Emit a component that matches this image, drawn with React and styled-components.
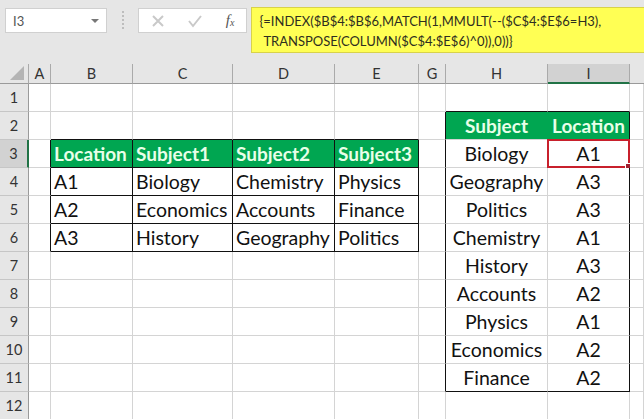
import React from 'react';
import styled, { createGlobalStyle } from 'styled-components';

const GlobalStyle = createGlobalStyle`
    html, body { margin: 0; padding: 0; background: #e6e6e6; }
    body { width: 644px; height: 419px; overflow: hidden; font-family: "Lato", "Liberation Sans", sans-serif; }
`;

const GRID = '#d4d4d4';
const BLACK = '#111';
const GREEN = '#00a651';
const columns = ['A', 'B', 'C', 'D', 'E', 'G', 'H', 'I'];
const rowCount = 12;

const cells = {
    B3: 'Location', C3: 'Subject1', D3: 'Subject2', E3: 'Subject3',
    B4: 'A1', C4: 'Biology', D4: 'Chemistry', E4: 'Physics',
    B5: 'A2', C5: 'Economics', D5: 'Accounts', E5: 'Finance',
    B6: 'A3', C6: 'History', D6: 'Geography', E6: 'Politics',
    H2: 'Subject', I2: 'Location',
    H3: 'Biology', I3: 'A1',
    H4: 'Geography', I4: 'A3',
    H5: 'Politics', I5: 'A3',
    H6: 'Chemistry', I6: 'A1',
    H7: 'History', I7: 'A3',
    H8: 'Accounts', I8: 'A2',
    H9: 'Physics', I9: 'A1',
    H10: 'Economics', I10: 'A2',
    H11: 'Finance', I11: 'A2',
};

const inLeftTable = (c, r) => 'BCDE'.includes(c) && r >= 3 && r <= 6;
const inRightTable = (c, r) => 'HI'.includes(c) && r >= 2 && r <= 11;

const rightColor = (c, r) => {
    if (inLeftTable(c, r)) return BLACK;
    if (c === 'A' && r >= 3 && r <= 6) return BLACK;
    if (c === 'G' && r >= 2 && r <= 11) return BLACK;
    if (c === 'I' && r >= 2 && r <= 11) return BLACK;
    if (c === 'H' && r === 2) return GREEN;
    return GRID;
};

const bottomColor = (c, r) => {
    if (inLeftTable(c, r)) return BLACK;
    if ('BCDE'.includes(c) && r === 2) return BLACK;
    if ('HI'.includes(c) && (r === 1 || r === 11)) return BLACK;
    return GRID;
};

const Toolbar = styled.div`
    display: flex;
    align-items: flex-start;
    height: 64px;
    padding: 7px 0 0 5px;
    box-sizing: border-box;
    background: #e6e6e6;
`;

const NameBox = styled.div`
    display: flex;
    align-items: center;
    justify-content: space-between;
    width: 102px;
    height: 25px;
    margin-top: 1px;
    padding: 0 7px;
    box-sizing: border-box;
    background: #fff;
    border: 1px solid #d0d0d0;
`;

const NameText = styled.span`
    font-size: 13px;
    color: #555;
`;

const Caret = styled.span`
    width: 0;
    height: 0;
    border-left: 4px solid transparent;
    border-right: 4px solid transparent;
    border-top: 4px solid #777;
`;

const Grip = styled.div`
    width: 2px;
    height: 20px;
    margin: 4px 14px 0 15px;
    background: repeating-linear-gradient(to bottom, #bdbdbd 0 2px, transparent 2px 4px);
`;

const FormulaButtons = styled.div`
    display: flex;
    align-items: center;
    justify-content: space-between;
    width: 110px;
    height: 25px;
    margin-top: 1px;
    padding: 0 12px;
    box-sizing: border-box;
    background: #fff;
    border: 1px solid #d0d0d0;
`;

const Fx = styled.span`
    font-family: "Liberation Serif", serif;
    font-style: italic;
    font-size: 15px;
    color: #555;
    line-height: 1;
    sub { font-size: 10px; vertical-align: -1px; line-height: 0; }
`;

const Formula = styled.div`
    display: flex;
    flex-direction: column;
    width: 394px;
    height: 46px;
    margin-left: 4px;
    padding: 3px 0 0 7px;
    box-sizing: border-box;
    background: #ffff54;
    border-top: 1px solid #d8d24a;
    border-left: 1px solid #d8d24a;
    border-bottom: 1px solid #d8d24a;
`;

const FormulaLine = styled.div`
    font-size: 13px;
    line-height: 20px;
    color: #2e2e20;
    white-space: nowrap;
    padding-left: ${(p) => (p.$indent ? '4px' : '0')};
`;

const Sheet = styled.div`
    display: grid;
    grid-template-columns: 29px 22px 82px 100px 102px 84px 27px 102px 82px 14px;
    grid-template-rows: 20px repeat(${rowCount}, 28px);
    height: 355px;
    overflow: hidden;
    background: #fff;
`;

const Corner = styled.div`
    display: flex;
    align-items: flex-end;
    justify-content: flex-end;
    padding: 0 3px 2px 0;
    background: #e6e6e6;
    border-right: 1px solid #aaa;
    border-bottom: 1px solid #9a9a9a;
`;

const ColHead = styled.div`
    display: flex;
    align-items: center;
    justify-content: center;
    box-sizing: border-box;
    font-size: 14.5px;
    color: #333;
    background: ${(p) => (p.$active ? '#d2d2d2' : '#e6e6e6')};
    border-right: ${(p) => (p.$last ? 'none' : '1px solid #aaa')};
    border-bottom: ${(p) => (p.$active ? '2px solid #217346' : '1px solid #9a9a9a')};
`;

const RowHead = styled.div`
    display: flex;
    align-items: center;
    justify-content: center;
    box-sizing: border-box;
    font-size: 14.5px;
    color: #333;
    background: ${(p) => (p.$active ? '#d2d2d2' : '#e6e6e6')};
    border-right: ${(p) => (p.$active ? '2px solid #217346' : '1px solid #9a9a9a')};
    border-bottom: 1px solid #c6c6c6;
`;

const Cell = styled.div`
    position: relative;
    display: flex;
    align-items: center;
    justify-content: ${(p) => (p.$center ? 'center' : 'flex-start')};
    box-sizing: border-box;
    padding: 0 3px;
    font-size: ${(p) => (p.$head ? '19px' : '19.5px')};
    font-weight: ${(p) => (p.$head ? 700 : 400)};
    color: ${(p) => (p.$head ? '#e8ffe8' : '#111')};
    background: ${(p) => (p.$head ? GREEN : '#fff')};
    border-right: 1px solid ${(p) => p.$right};
    border-bottom: 1px solid ${(p) => p.$bottom};
    white-space: nowrap;
`;

const Selection = styled.div`
    position: absolute;
    top: -1px;
    left: -1px;
    right: -1px;
    bottom: -1px;
    border: 2px solid #c8202c;
`;

const FillHandle = styled.div`
    position: absolute;
    right: -4px;
    bottom: -4px;
    width: 5px;
    height: 5px;
    background: #a02030;
    border: 1px solid #fff;
`;

const App = () => {
    return (
        <>
            <GlobalStyle />
            <Toolbar>
                <NameBox>
                    <NameText>I3</NameText>
                    <Caret />
                </NameBox>
                <Grip />
                <FormulaButtons>
                    <svg width="14" height="14" viewBox="0 0 14 14">
                        <path d="M2 2 L12 12 M12 2 L2 12" stroke="#c9c9c9" strokeWidth="2" fill="none" />
                    </svg>
                    <svg width="16" height="14" viewBox="0 0 16 14">
                        <path d="M2 7 L6 12 L14 2" stroke="#c9c9c9" strokeWidth="2" fill="none" />
                    </svg>
                    <Fx>f<sub>x</sub></Fx>
                </FormulaButtons>
                <Formula>
                    <FormulaLine>{'{=INDEX($B$4:$B$6,MATCH(1,MMULT(--($C$4:$E$6=H3),'}</FormulaLine>
                    <FormulaLine $indent>{'TRANSPOSE(COLUMN($C$4:$E$6)^0)),0))}'}</FormulaLine>
                </Formula>
            </Toolbar>
            <Sheet>
                <Corner>
                    <svg width="16" height="16" viewBox="0 0 16 16">
                        <path d="M15 1 V15 H1 Z" fill="#b4b4b4" />
                    </svg>
                </Corner>
                {columns.map((c) => (
                    <ColHead key={c} $active={c === 'I'}>{c}</ColHead>
                ))}
                <ColHead $last />
                {Array.from({ length: rowCount }, (_, i) => i + 1).map((r) => (
                    <React.Fragment key={r}>
                        <RowHead $active={r === 3}>{r}</RowHead>
                        {columns.map((c) => {
                            const id = `${c}${r}`;
                            const isHead = (r === 3 && inLeftTable(c, r)) || (r === 2 && inRightTable(c, r));
                            return (
                                <Cell
                                    key={id}
                                    $right={rightColor(c, r)}
                                    $bottom={bottomColor(c, r)}
                                    $head={isHead}
                                    $center={inRightTable(c, r)}
                                >
                                    {cells[id]}
                                    {id === 'I3' && <Selection><FillHandle /></Selection>}
                                </Cell>
                            );
                        })}
                        <Cell $right={GRID} $bottom={GRID} />
                    </React.Fragment>
                ))}
            </Sheet>
        </>
    );
};

export default App;
